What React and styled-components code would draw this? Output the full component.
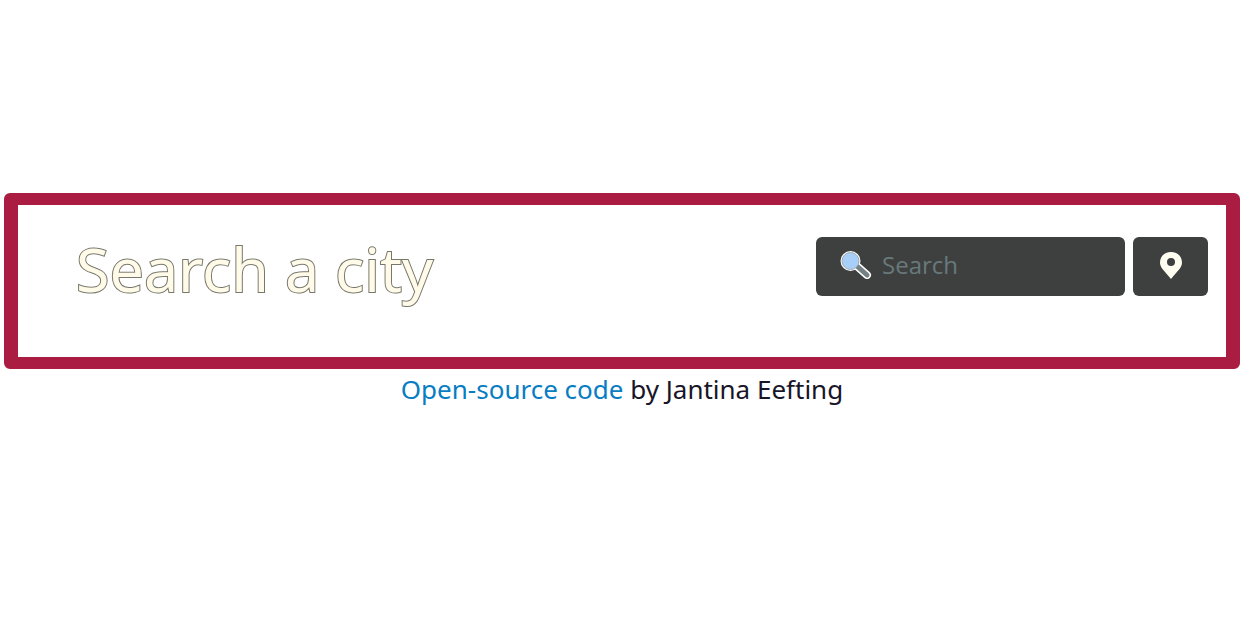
import React from "react";
import styled, { createGlobalStyle } from "styled-components";

const GlobalStyle = createGlobalStyle`
  * { box-sizing: border-box; }
  body { margin: 0; background: #fff; font-family: "Noto Sans", "Open Sans", sans-serif; }
`;

const Page = styled.div`
  padding: 193px 9px 20px 4px;
`;

const Panel = styled.header`
  display: flex;
  align-items: flex-start;
  justify-content: space-between;
  gap: 24px;
  padding: 32px 18px 60px 58px;
  border: solid #ab1c42;
  border-width: 12px 14px;
  border-radius: 6px;
`;

const Title = styled.h1`
  margin: 0;
  font-family: "Noto Sans", "Open Sans", sans-serif;
  font-size: 61px;
  font-weight: 400;
  line-height: 64px;
  height: 60px;
  white-space: nowrap;
  color: #fffbe8;
  -webkit-text-stroke: 2px #77776c;
  paint-order: stroke fill;
`;

const SearchForm = styled.form`
  display: flex;
  gap: 8px;
  width: 392px;
`;

const SearchField = styled.label`
  display: flex;
  flex: 1;
  align-items: center;
  gap: 10px;
  min-width: 0;
  height: 59px;
  padding: 0 24px 4px;
  border-radius: 6px;
  background: #3e4040;
`;

const SearchInput = styled.input`
  flex: 1;
  min-width: 0;
  padding: 0;
  border: 0;
  outline: 0;
  background: transparent;
  color: #fffbe8;
  font-family: "Open Sans", sans-serif;
  font-size: 24px;
  line-height: 32px;
  &::placeholder { color: #68797b; opacity: 1; }
`;

const LocateButton = styled.button`
  display: grid;
  place-items: center;
  width: 75px;
  height: 59px;
  padding: 0 0 2px;
  border: 0;
  border-radius: 6px;
  background: #3e4040;
`;

const Credit = styled.footer`
  text-align: center;
  color: #181528;
  font-size: 26px;
  line-height: 40px;
`;

const CreditLink = styled.a`
  color: #087dc3;
  text-decoration: none;
`;

function Magnifier() {
  return (
    <svg width="32" height="28" viewBox="0 0 32 28" aria-hidden="true">
      <g stroke="#fff" strokeLinecap="round">
        <path d="M18 16 27 24" strokeWidth="8" />
        <circle cx="10.500" cy="10" r="10" fill="#fff" stroke="none" />
      </g>
      <path d="M18 16 27 24" stroke="#738084" strokeWidth="5" strokeLinecap="round" />
      <circle cx="10.500" cy="10" r="8.500" fill="#a8cff7" stroke="#9fa9b0" strokeWidth="1" />
    </svg>
  );
}

function Pin() {
  return (
    <svg width="22" height="27" viewBox="0 0 22 27" aria-hidden="true">
      <path
        fill="#fffef0"
        fillRule="evenodd"
        d="M11 0C4.700 0 0 4.500 0 10.500C0 15.500 4 18.500 11 27C18 18.500 22 15.500 22 10.500C22 4.500 17.300 0 11 0ZM11 6A4 4 0 1 1 11 14A4 4 0 1 1 11 6Z"
      />
    </svg>
  );
}

export default function App() {
  return (
    <>
      <GlobalStyle />
      <Page>
        <Panel>
          <Title>Search a city</Title>
          <SearchForm onSubmit={(event) => event.preventDefault()}>
            <SearchField>
              <Magnifier />
              <SearchInput type="text" placeholder="Search" aria-label="Search" />
            </SearchField>
            <LocateButton type="button" aria-label="Use my location">
              <Pin />
            </LocateButton>
          </SearchForm>
        </Panel>
        <Credit>
          <CreditLink href="#source">Open-source code</CreditLink> by Jantina Eefting
        </Credit>
      </Page>
    </>
  );
}
